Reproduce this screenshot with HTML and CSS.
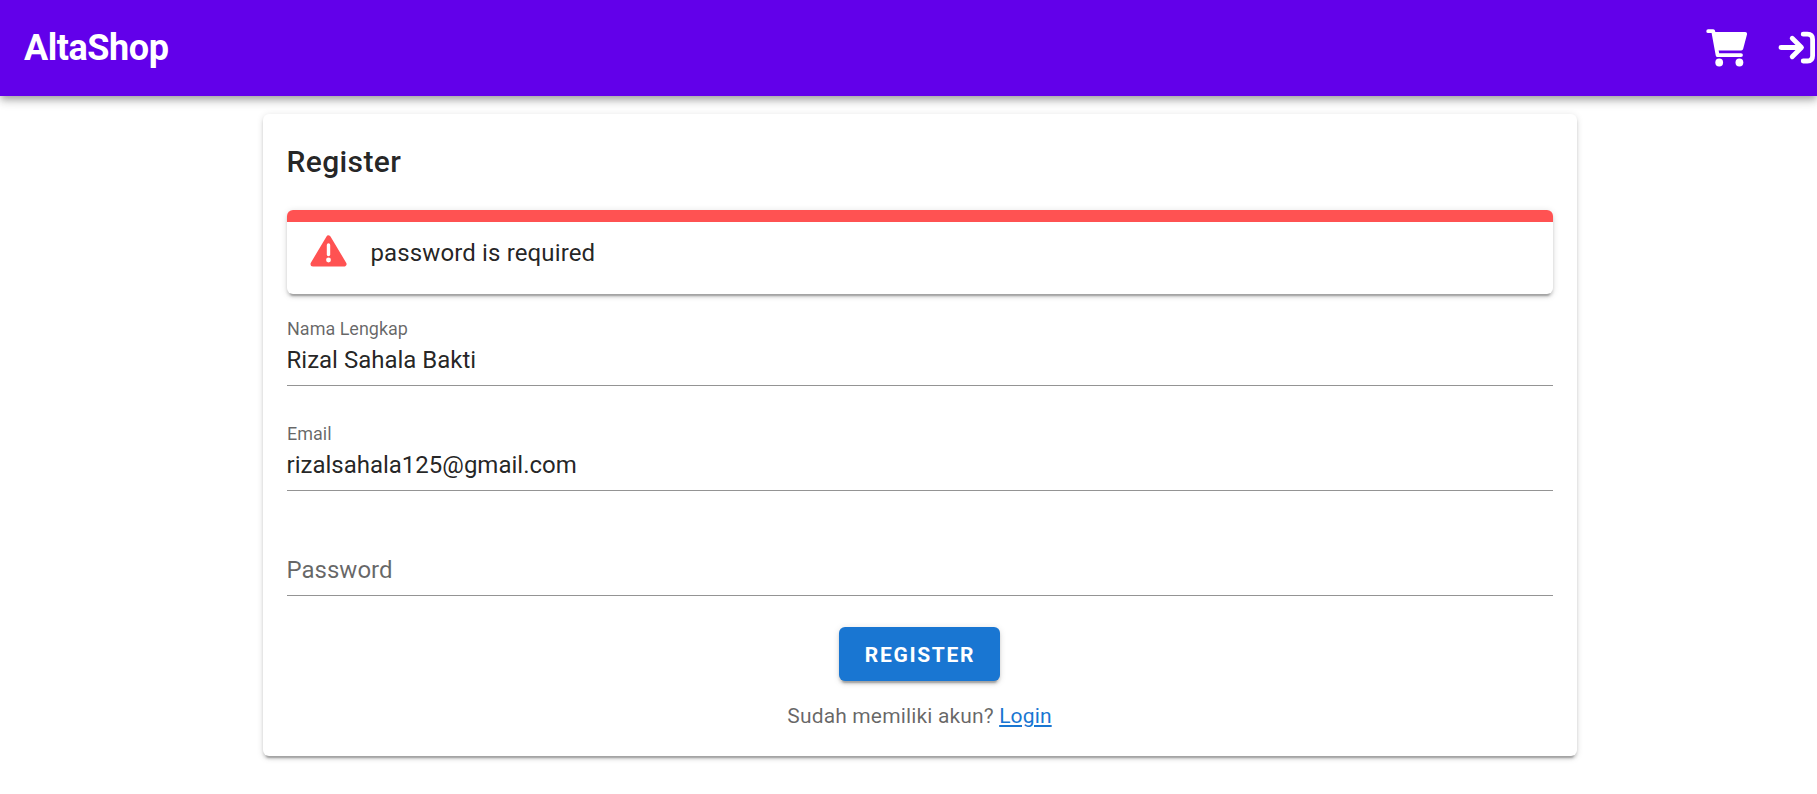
FILE: index.html
```html
<!DOCTYPE html>
<html lang="id">
<head>
<meta charset="utf-8">
<title>AltaShop</title>
<link rel="stylesheet" href="styles.css">
</head>
<body>
<header class="app-bar">
  <a class="brand">AltaShop</a>
  <nav class="actions">
    <svg class="cart" viewBox="0 0 42 38" fill="none" stroke="#fff" stroke-width="3.8" stroke-linecap="round" stroke-linejoin="round">
      <path d="M2.2 2.2H7.2L11.6 26.1H35"/>
      <path d="M9 4.8H39.2L35.3 19.6H11.5Z" fill="#fff"/>
      <g fill="#fff" stroke="none"><circle cx="13.2" cy="33.5" r="3.9"/><circle cx="33.4" cy="33.5" r="3.9"/></g>
    </svg>
    <svg class="login" viewBox="0 0 38 33" fill="none" stroke="#fff" stroke-width="4.8" stroke-linecap="round" stroke-linejoin="round">
      <path d="M3 16.5H23M14.2 7.2 23.5 16.5 14.2 25.8"/>
      <path d="M25.2 3.2H29.4Q34.6 3.2 34.6 8.4V24.8Q34.6 30 29.4 30H25.2"/>
    </svg>
  </nav>
</header>
<main class="card">
  <h1 class="card-title">Register</h1>
  <div class="alert" role="alert">
    <svg class="alert-icon" viewBox="0 0 37 32">
      <path d="M18.5 3 34 29H3Z" fill="#ff5252" stroke="#ff5252" stroke-width="5" stroke-linejoin="round"/>
      <path d="M18.5 10V19.5" stroke="#fff" stroke-width="3.4" stroke-linecap="round"/>
      <circle cx="18.5" cy="25" r="2.4" fill="#fff"/>
    </svg>
    <span class="alert-text">password is required</span>
  </div>
  <form class="form">
    <div class="field"><label class="label">Nama Lengkap</label><div class="value">Rizal Sahala Bakti</div></div>
    <div class="field"><label class="label">Email</label><div class="value">rizalsahala125@gmail.com</div></div>
    <div class="field"><div class="value placeholder">Password</div></div>
    <button class="submit" type="button">REGISTER</button>
  </form>
  <p class="hint">Sudah memiliki akun? <a class="link">Login</a></p>
</main>
</body>
</html>
```

FILE: styles.css
```css
* { box-sizing: border-box; }
body {
  margin: 0;
  height: 794px;
  overflow: hidden;
  background: #fff;
  color: rgba(0, 0, 0, 0.87);
  font-family: Roboto, sans-serif;
  font-size: 24px;
}
.app-bar {
  display: flex;
  align-items: center;
  justify-content: space-between;
  height: 96px;
  padding-left: 24px;
  background: #6200ea;
  color: #fff;
  box-shadow: 0 3px 6px -1.5px rgba(0, 0, 0, 0.2), 0 6px 7.5px rgba(0, 0, 0, 0.14), 0 1.5px 15px rgba(0, 0, 0, 0.12);
}
.brand { font-size: 36px; font-weight: 700; letter-spacing: -0.45px; line-height: 48px; }
.actions { display: flex; align-items: center; gap: 30px; padding: 0 1px 0 0; }
.cart { width: 42px; height: 38px; }
.login { width: 38px; height: 33px; margin-bottom: 1px; }
.card {
  width: 1314px;
  height: 642px;
  margin: 18px 0 0 263px;
  padding: 24px;
  border-radius: 6px;
  background: #fff;
  box-shadow: 0 4.5px 1.5px -3px rgba(0, 0, 0, 0.2), 0 3px 3px rgba(0, 0, 0, 0.14), 0 1.5px 7.5px rgba(0, 0, 0, 0.12);
}
.card-title { margin: 0 0 24px -0.5px; font-size: 30px; font-weight: 500; line-height: 48px; letter-spacing: 0.0125em; }
.alert {
  display: flex;
  align-items: flex-start;
  gap: 24px;
  height: 84px;
  padding: 12px 23px;
  border-top: 12px solid #ff5252;
  border-radius: 6px;
  line-height: 36px;
  box-shadow: 0 4.5px 1.5px -3px rgba(0, 0, 0, 0.2), 0 3px 3px rgba(0, 0, 0, 0.14), 0 1.5px 7.5px rgba(0, 0, 0, 0.12);
}
.alert-icon { width: 37px; height: 32px; margin-top: 1px; }
.alert-text { margin: 1px 0 0 -0.5px; letter-spacing: 0.13px; }
.form { display: flex; flex-direction: column; align-items: center; padding-top: 20px; }
.field {
  display: flex;
  flex-direction: column;
  justify-content: flex-end;
  width: 100%;
  height: 72px;
  margin-bottom: 33px;
  padding-bottom: 7px;
  border-bottom: 1px solid #949494;
}
.label { height: 25px; color: rgba(0, 0, 0, 0.6); font-size: 18px; line-height: 24px; }
.value { height: 36px; margin-left: -0.5px; line-height: 36px; }
.placeholder { color: rgba(0, 0, 0, 0.6); }
.submit {
  width: 161px;
  height: 54px;
  margin: -2px 1px 0 0;
  padding: 1px 0 0 1px;
  border: 0;
  border-radius: 6px;
  background: #1976d2;
  color: #fff;
  font: 700 21px Roboto, sans-serif;
  letter-spacing: 0.08em;
  box-shadow: 0 4.5px 1.5px -3px rgba(0, 0, 0, 0.2), 0 3px 3px rgba(0, 0, 0, 0.14), 0 1.5px 7.5px rgba(0, 0, 0, 0.12);
}
.hint { margin: 19px 1px 0 0; color: rgba(0, 0, 0, 0.6); font-size: 21px; line-height: 33px; letter-spacing: 0.0071em; text-align: center; }
.link { color: #1976d2; text-decoration: underline; }
```
